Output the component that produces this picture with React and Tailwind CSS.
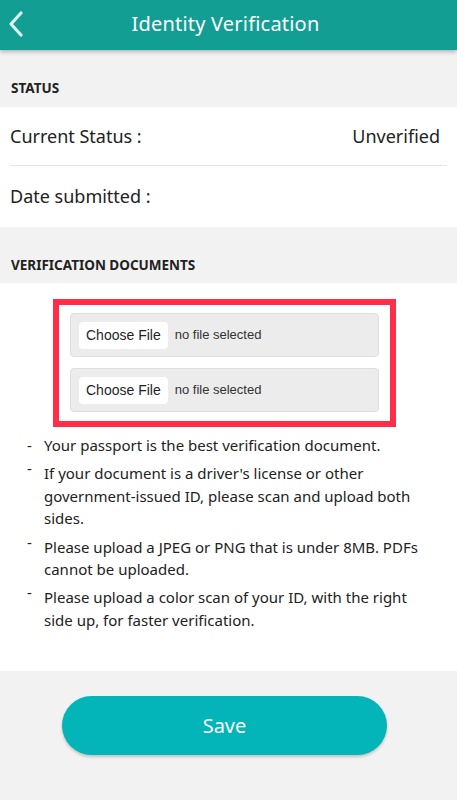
import { useState } from 'react';

const tips = [
  'Your passport is the best verification document.',
  "If your document is a driver's license or other government-issued ID, please scan and upload both sides.",
  'Please upload a JPEG or PNG that is under 8MB. PDFs cannot be uploaded.',
  'Please upload a color scan of your ID, with the right side up, for faster verification.',
];

const FilePicker = () => (
  <div className="flex items-center h-[44px] px-2 bg-[#ececec] border border-[#dedede] rounded-[4px]">
    <button className="h-[27px] px-[7px] bg-white rounded-[4px] text-[14px] text-[#1f1f1f] font-['Liberation_Sans',sans-serif]">
      Choose File
    </button>
    <span className="ml-[7px] text-[13px] text-[#333] font-['Liberation_Sans',sans-serif]">
      no file selected
    </span>
  </div>
);

const App = () => {
  const [saving, setSaving] = useState(false);

  return (
    <div className="min-h-[800px] bg-[#f2f2f2] flex flex-col font-['Noto_Sans',sans-serif] text-[#222]">
      {/* Header */}
      <header className="relative z-10 h-[50px] bg-[#139e94] flex items-center justify-center pb-[3px] shadow-[0_2px_4px_rgba(0,0,0,0.25)]">
        <button className="absolute left-[6px] top-[9px] text-[#d9f2ef]">
          <svg width="20" height="30" viewBox="0 0 20 30" fill="none">
            <path d="M15 4 L5 15 L15 26" stroke="currentColor" strokeWidth="3.2" strokeLinecap="round" strokeLinejoin="round" />
          </svg>
        </button>
        <h1 className="text-[20px] text-white tracking-[0.2px] -ml-[6px]">Identity Verification</h1>
      </header>

      {/* Status */}
      <div className="h-[57px] flex items-end pb-[9px] px-[11px]">
        <h2 className="text-[13.5px] font-bold text-[#222]">STATUS</h2>
      </div>
      <section className="bg-white px-[10px]">
        <div className="h-[59px] flex items-center justify-between border-b border-[#e6e6e6] text-[18px]">
          <span>Current Status :</span>
          <span className="pr-[7px]">Unverified</span>
        </div>
        <div className="h-[61px] flex items-center text-[18px]">
          <span>Date submitted :</span>
        </div>
      </section>

      {/* Documents */}
      <div className="h-[56px] flex items-end pb-[8px] px-[11px]">
        <h2 className="text-[13.5px] font-bold text-[#222]">VERIFICATION DOCUMENTS</h2>
      </div>
      <section className="bg-white pt-[16px] pb-[40px]">
        <div className="ml-[53px] w-[343px] border-[6px] border-[#ff2d48] px-[11px] pt-[8px] pb-[9px] flex flex-col gap-[11px]">
          <FilePicker />
          <FilePicker />
        </div>
        <ul className="mt-[7px] pl-[27px] pr-[20px] flex flex-col gap-[6px]">
          {tips.map((t, i) => (
            <li key={i} className="flex text-[15px] leading-[22.4px] text-[#222]">
              <span className={`w-[17px] shrink-0 ${i === 0 ? '' : '-mt-[5px]'}`}>-</span>
              <span>{t}</span>
            </li>
          ))}
        </ul>
      </section>

      {/* Save */}
      <div className="pt-[25px] pb-[40px]">
        <button
          onClick={() => setSaving(!saving)}
          className="ml-[62px] w-[325px] h-[59px] rounded-full bg-[#03b4b9] text-white text-[20px] shadow-[0_2px_3px_rgba(0,0,0,0.2)]"
        >
          Save
        </button>
      </div>
    </div>
  );
};

export default App;
